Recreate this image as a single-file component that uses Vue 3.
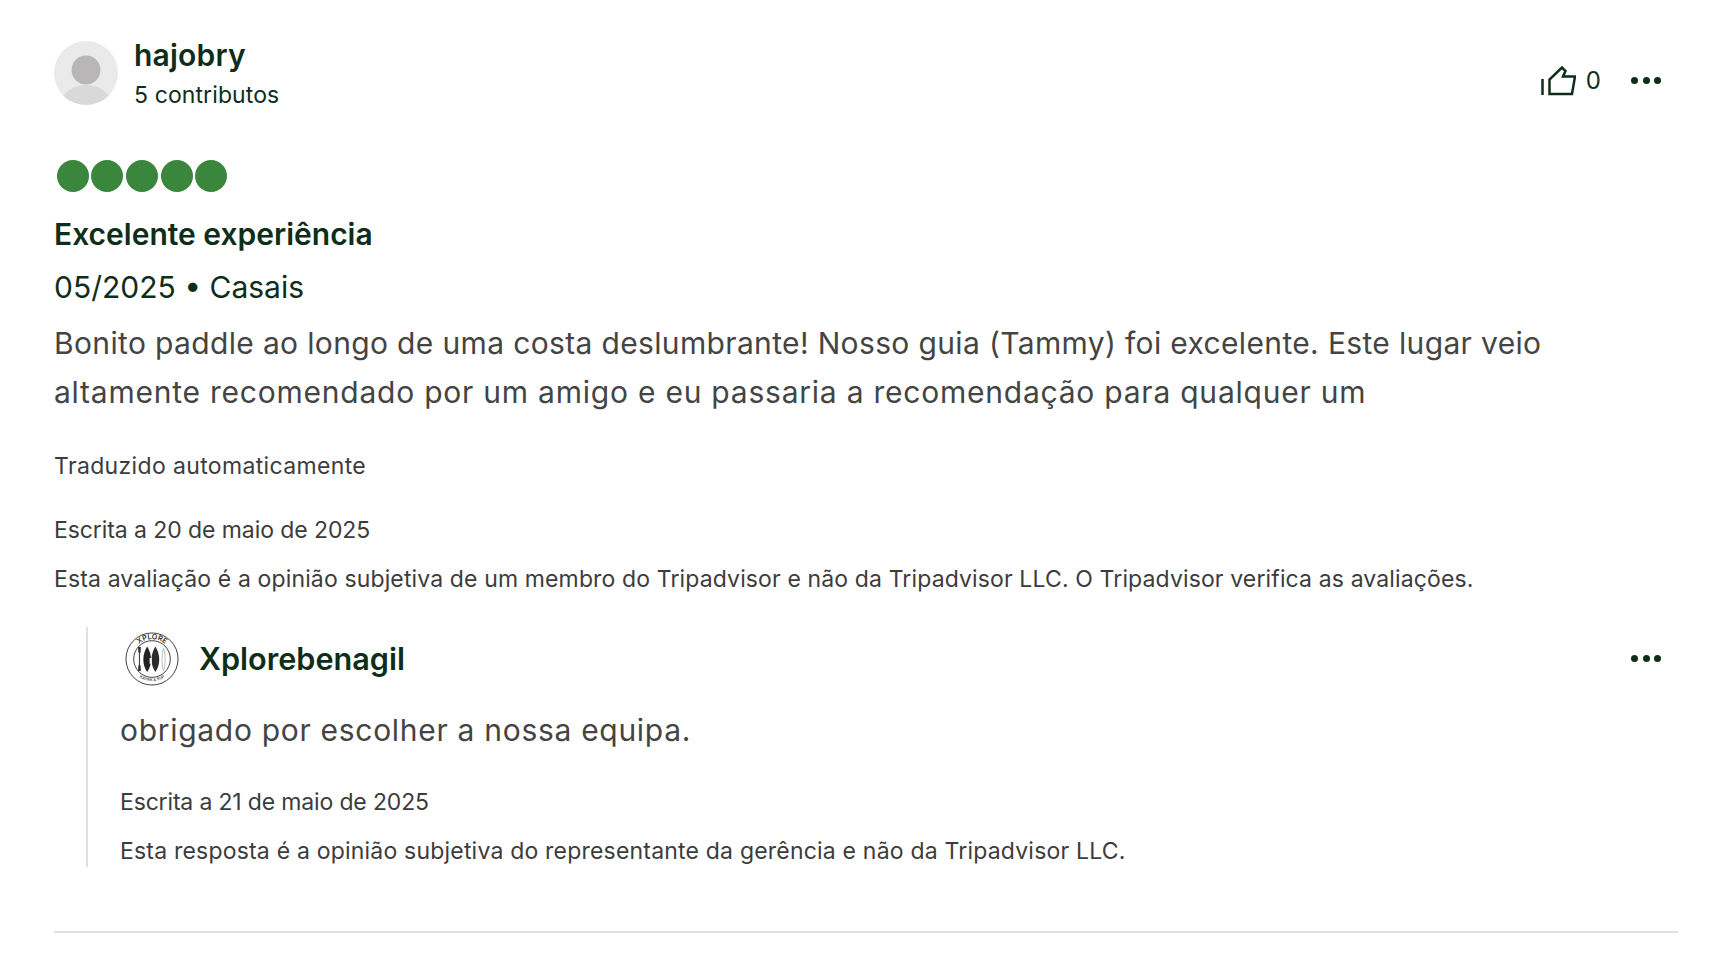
<script setup>
const stars = [1, 2, 3, 4, 5]
</script>

<template>
  <div class="page">
    <article class="review">
      <header class="head">
        <div class="avatar">
          <svg viewBox="0 0 64 64" width="64" height="64">
            <defs><clipPath id="av"><circle cx="32" cy="32" r="32" /></clipPath></defs>
            <g clip-path="url(#av)">
              <rect width="64" height="64" fill="#eaeaea" />
              <circle cx="32" cy="29" r="14.4" fill="#b8b6b6" />
              <circle cx="32" cy="74" r="30" fill="#d9d9d9" />
            </g>
          </svg>
        </div>
        <div class="who">
          <div class="name">hajobry</div>
          <div class="contrib">5 contributos</div>
        </div>
        <div class="actions">
          <svg class="thumb" viewBox="0 0 36 32" width="36" height="32" fill="none" stroke="#0f2e1a" stroke-width="2.5">
            <path d="M2.5 14v16" />
            <path d="M9.5 29V14.5L22 2.5 25.5 6 23 11.5H35L32 29Z" stroke-linejoin="miter" />
          </svg>
          <span class="count">0</span>
          <span class="dots"><i></i><i></i><i></i></span>
        </div>
      </header>

      <div class="stars"><span v-for="s in stars" :key="s" class="star"></span></div>
      <h3 class="title">Excelente experiência</h3>
      <div class="meta">05/2025 • Casais</div>
      <p class="body">Bonito paddle ao longo de uma costa deslumbrante! Nosso guia (Tammy) foi excelente. Este lugar veio <span class="body-end">altamente recomendado por um amigo e eu passaria a recomendação para qualquer um</span></p>
      <div class="small translated">Traduzido automaticamente</div>
      <div class="small written">Escrita a 20 de maio de 2025</div>
      <div class="small disclaimer">Esta avaliação é a opinião subjetiva de um membro do Tripadvisor e não da Tripadvisor LLC. O Tripadvisor verifica as avaliações.</div>

      <section class="reply">
        <div class="reply-head">
          <svg class="logo" viewBox="0 0 56 56" width="54" height="54" fill="none">
            <defs>
              <path id="arcTop" d="M7.5 28a20.5 20.5 0 0 1 41 0" />
              <path id="arcBot" d="M5 28a23 23 0 0 0 46 0" />
            </defs>
            <circle cx="28" cy="28" r="27" stroke="#3a3a3a" stroke-width="1" />
            <circle cx="28" cy="28" r="19" stroke="#3a3a3a" stroke-width="1" />
            <text class="arc" font-size="7.5" fill="#333" text-anchor="middle"><textPath href="#arcTop" startOffset="50%">XPLORE</textPath></text>
            <text class="arc" font-size="4.2" fill="#555" text-anchor="middle"><textPath href="#arcBot" startOffset="50%">KAYAK &amp; SUP</textPath></text>
            <path d="M15 16v24" stroke="#444" stroke-width="1.2" />
            <path d="M13.500 15.500h3l-.4 6h-2.200ZM13.500 40.500h3l-.4-6h-2.200Z" fill="#333" />
            <path d="M23 15c-2.500 4-4 8.500-4 13.500S20.500 38 23 41.500c2.500-3.500 4-8 4-13S25.500 19 23 15Z" fill="#222" />
            <path d="M31.500 15c2.500 4 4 8.500 4 13.500S34 38 31.500 41.500c-2.500-3.500-4-8-4-13S29 19 31.500 15Z" fill="#2c2c2c" />
            <rect x="25.500" y="27" width="2.400" height="6" fill="#eee" />
            <path d="M40 17c1.200 3.500 1.600 7.500 1.600 11.500s-.4 8-1.600 11.500c-1.200-3.500-1.600-7.500-1.600-11.500s.4-8 1.600-11.500Z" stroke="#aaa" stroke-width=".8" />
          </svg>
          <div class="reply-name">Xplorebenagil</div>
          <span class="dots"><i></i><i></i><i></i></span>
        </div>
        <p class="reply-body">obrigado por escolher a nossa equipa.</p>
        <div class="small reply-written">Escrita a 21 de maio de 2025</div>
        <div class="small reply-disc">Esta resposta é a opinião subjetiva do representante da gerência e não da Tripadvisor LLC.</div>
      </section>
    </article>
    <hr class="rule" />
  </div>
</template>

<style>
html, body { margin: 0; background: #fff; }
</style>

<style scoped>
.page {
  padding: 41px 56px 0 54px;
  font-family: "Inter", "Noto Sans", sans-serif;
  color: #0f2e1a;
}
.head { display: flex; align-items: flex-start; height: 64px; }
.avatar { width: 64px; height: 64px; margin-right: 16px; }
.avatar svg { display: block; }
.who { flex: 1; }
.name { font-size: 30px; font-weight: 600; line-height: 30px; letter-spacing: 0.2px; margin-top: -1px; }
.contrib { font-size: 23px; line-height: 30px; margin-top: 10px; letter-spacing: 0.1px; }
.actions { display: flex; align-items: center; margin-top: 24px; margin-right: 17px; }
.thumb { display: block; margin-right: 10px; }
.count { font-size: 24px; line-height: 30px; margin-right: 30px; }
.dots { display: flex; gap: 4.5px; margin-top: -1px; }
.dots i { width: 7px; height: 7px; border-radius: 50%; background: #0f2e1a; display: block; }
.stars { display: flex; gap: 2.7px; margin: 55px 0 0 2.5px; }
.star { width: 32px; height: 32px; border-radius: 50%; background: #3b863d; display: block; }
.title { font-size: 30px; font-weight: 600; line-height: 38px; margin: 23px 0 0; }
.meta { font-size: 30px; line-height: 40px; margin-top: 14px; }
.body { font-size: 30px; line-height: 49px; letter-spacing: 0.35px; color: #444; margin: 12px 0 0; }
.body-end { letter-spacing: 0.77px; }
.small { font-size: 23px; line-height: 30px; color: #3c3c3c; }
.translated { margin-top: 34px; letter-spacing: 0.35px; }
.written { margin-top: 34px; letter-spacing: -0.08px; }
.disclaimer { margin-top: 19px; letter-spacing: 0.13px; }
.reply { border-left: 2px solid #e0e0e0; margin: 33px 0 0 32px; padding-left: 32px; height: 240px; }
.reply-head { display: flex; align-items: center; height: 54px; padding-top: 5px; }
.logo { display: block; margin-left: 5px; margin-right: 20px; }
.arc { font-family: "Inter", sans-serif; font-weight: 600; }
.reply-name { flex: 1; font-size: 30.6px; font-weight: 600; margin-top: -2px; }
.reply-head .dots { margin-right: 17px; }
.reply-body { font-size: 30px; line-height: 40px; letter-spacing: 0.7px; color: #444; margin: 24px 0 0; }
.reply-written { margin-top: 37px; letter-spacing: -0.16px; }
.reply-disc { margin-top: 19px; letter-spacing: 0.2px; }
.rule { border: 0; border-top: 2px solid #e0e0e0; margin: 64px 0 0; }
</style>
